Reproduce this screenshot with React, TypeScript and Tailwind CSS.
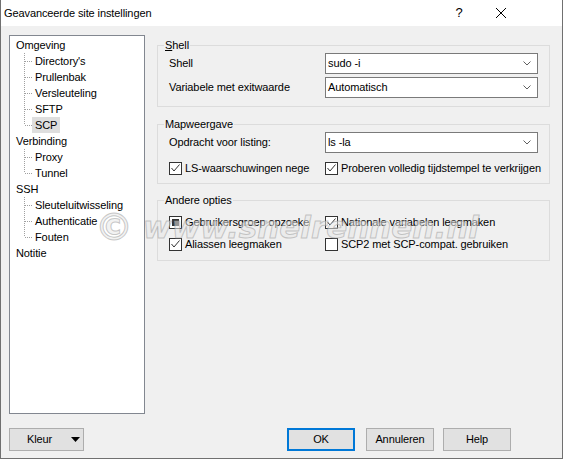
import React from "react";

type CheckState = "checked" | "unchecked" | "mixed";

const treeData: { label: string; children?: string[] }[] = [
  { label: "Omgeving", children: ["Directory's", "Prullenbak", "Versleuteling", "SFTP", "SCP"] },
  { label: "Verbinding", children: ["Proxy", "Tunnel"] },
  { label: "SSH", children: ["Sleuteluitwisseling", "Authenticatie", "Fouten"] },
  { label: "Notitie" },
];

function Connector({ last }: { last: boolean }) {
  return (
    <svg width="22" height="16" viewBox="0 0 22 16" className="shrink-0">
      <line x1="14.5" y1="0" x2="14.5" y2={last ? 8 : 16} stroke="#a0a0a0" strokeDasharray="1 1" />
      <line x1="15" y1="8.5" x2="22" y2="8.5" stroke="#a0a0a0" strokeDasharray="1 1" />
    </svg>
  );
}

function Tree() {
  return (
    <div className="w-[136px] h-[379px] shrink-0 border border-[#828790] bg-white pt-[1px]">
      {treeData.map((node) => (
        <div key={node.label}>
          <div className="h-[16px] leading-[16px] pl-[6px]">{node.label}</div>
          {node.children?.map((child, i) => {
            const selected = child === "SCP";
            return (
              <div key={child} className="flex h-[16px] leading-[16px]">
                <Connector last={i === node.children!.length - 1} />
                <span className={`px-[3px] ${selected ? "bg-[#dedede]" : ""}`}>{child}</span>
              </div>
            );
          })}
        </div>
      ))}
    </div>
  );
}

function Chevron() {
  return (
    <svg width="8" height="5" viewBox="0 0 8 5" className="shrink-0">
      <polyline points="0.5,0.5 4,4 7.5,0.5" fill="none" stroke="#606060" strokeWidth="1" />
    </svg>
  );
}

function Combo({ value }: { value: string }) {
  return (
    <div className="w-[214px] h-[21px] border border-[#7a7a7a] bg-white flex items-center pl-[2px] pr-[6px]">
      <span className="flex-1 whitespace-nowrap">{value}</span>
      <Chevron />
    </div>
  );
}

function Checkbox({ state }: { state: CheckState }) {
  return (
    <span className="w-[13px] h-[13px] shrink-0 border border-[#333333] bg-white flex items-center justify-center">
      {state === "checked" && (
        <svg width="11" height="11" viewBox="0 0 11 11">
          <polyline points="1.5,5 4,8 9.5,1.5" fill="none" stroke="#333333" strokeWidth="1" />
        </svg>
      )}
      {state === "mixed" && <span className="w-[7px] h-[7px] bg-[#333333]" />}
    </span>
  );
}

function Check({ state, label, clip }: { state: CheckState; label: string; clip?: boolean }) {
  return (
    <div className={`flex items-center whitespace-nowrap ${clip ? "w-[141px] overflow-hidden" : ""}`}>
      <Checkbox state={state} />
      <span className="ml-[3px]">{label}</span>
    </div>
  );
}

function CheckRow({ left, right }: { left: [CheckState, string]; right: [CheckState, string] }) {
  return (
    <div className="flex h-[16px] items-center">
      <div className="w-[156px] shrink-0">
        <Check state={left[0]} label={left[1]} clip />
      </div>
      <Check state={right[0]} label={right[1]} />
    </div>
  );
}

function ComboRow({ label, value }: { label: string; value: string }) {
  return (
    <div className="flex items-center h-[21px]">
      <span className="w-[156px] shrink-0">{label}</span>
      <Combo value={value} />
    </div>
  );
}

function Group({ title, className, children }: { title: React.ReactNode; className?: string; children: React.ReactNode }) {
  return (
    <fieldset className={`border border-[#dcdcdc] px-[11px] min-w-0 ${className ?? ""}`}>
      <legend className="ml-[-5px] px-[1px] leading-[16px]">{title}</legend>
      {children}
    </fieldset>
  );
}

function Button({ children, primary, className }: { children: React.ReactNode; primary?: boolean; className?: string }) {
  return (
    <div
      className={`w-[68px] h-[23px] bg-[#e1e1e1] flex items-center justify-center ${
        primary ? "border-2 border-[#0078d7]" : "border border-[#adadad]"
      } ${className ?? ""}`}
    >
      {children}
    </div>
  );
}

export default function App() {
  return (
    <div className="relative w-[563px] h-[459px] flex flex-col border-x border-b border-[#707070] bg-[#f0f0f0] text-[11px] tracking-[-0.1px] text-black font-['Liberation_Sans',Arial,sans-serif] overflow-hidden">
      {/* title bar */}
      <div className="h-[26px] shrink-0 bg-white flex items-center pl-[3px]">
        <span>Geavanceerde site instellingen</span>
        <div className="ml-auto flex items-center mr-[40px]">
          <span className="w-[42px] text-center text-[13px]">?</span>
          <span className="w-[42px] flex justify-center">
            <svg width="10" height="10" viewBox="0 0 10 10">
              <line x1="0" y1="0" x2="10" y2="10" stroke="#000" strokeWidth="1" />
              <line x1="10" y1="0" x2="0" y2="10" stroke="#000" strokeWidth="1" />
            </svg>
          </span>
        </div>
      </div>

      <div className="flex-1 flex flex-col px-[8px] pt-[9px] pb-[7px]">
        <div className="flex">
          <Tree />
          <div className="ml-[12px] mt-[2px] w-[393px] flex flex-col">
            <Group
              title={
                <>
                  <u>S</u>hell
                </>
              }
              className="pb-[8px]"
            >
              <ComboRow label="Shell" value="sudo -i" />
              <div className="mt-[3px]">
                <ComboRow label="Variabele met exitwaarde" value="Automatisch" />
              </div>
            </Group>

            <Group title="Mapweergave" className="mt-[9px] pb-[7px]">
              <ComboRow label="Opdracht voor listing:" value="ls -la" />
              <div className="mt-[7px]">
                <CheckRow
                  left={["checked", "LS-waarschuwingen negeren"]}
                  right={["checked", "Proberen volledig tijdstempel te verkrijgen"]}
                />
              </div>
            </Group>

            <Group title="Andere opties" className="mt-[8px] pb-[8px]">
              <div className="mt-[6px]">
                <CheckRow
                  left={["mixed", "Gebruikersgroep opzoeken"]}
                  right={["checked", "Nationale variabelen leegmaken"]}
                />
              </div>
              <div className="mt-[6px]">
                <CheckRow
                  left={["checked", "Aliassen leegmaken"]}
                  right={["unchecked", "SCP2 met SCP-compat. gebruiken"]}
                />
              </div>
            </Group>
          </div>
        </div>

        <div className="flex mt-[14px]">
          <div className="w-[75px] h-[23px] bg-[#e1e1e1] border border-[#adadad] flex items-center pl-[17px] pr-[3px]">
            <span>Kleur</span>
            <svg width="9" height="5" viewBox="0 0 9 5" className="ml-auto">
              <polygon points="0,0 9,0 4.5,5" fill="#000" />
            </svg>
          </div>
          <Button primary className="ml-[203px]">OK</Button>
          <Button className="ml-[11px]">Annuleren</Button>
          <Button className="ml-[9px]">Help</Button>
        </div>
      </div>

      {/* watermark */}
      <div className="pointer-events-none absolute left-[94px] top-[207px] flex items-center italic font-bold font-['DejaVu_Sans',sans-serif] text-[31px] leading-[40px] tracking-normal text-[rgba(232,232,232,0.55)] [-webkit-text-stroke:1px_rgba(150,150,150,0.5)]">
        <span className="text-[38px] mr-[10px]">©</span>
        <span>www.snelrennen.nl</span>
      </div>
    </div>
  );
}
